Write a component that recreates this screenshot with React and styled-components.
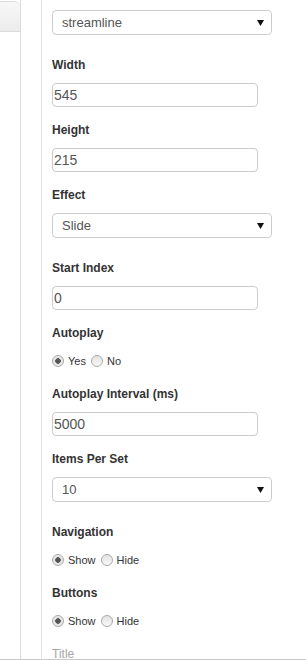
import React from "react";
import styled, { createGlobalStyle } from "styled-components";

const GlobalStyle = createGlobalStyle`
  html, body {
    margin: 0;
    padding: 0;
    background: #ffffff;
    font-family: "Liberation Sans", Arial, sans-serif;
  }
`

const Page = styled.div`
  display: flex;
  height: 659px;
  border-bottom: 1px solid #c9c9c9;
  overflow: hidden;
`
const SidePanel = styled.div`
  width: 20px;
  flex-shrink: 0;
  border-right: 1px solid #dcdcdc;
`
const SideTab = styled.div`
  height: 31px;
  margin-top: 1px;
  background: linear-gradient(#f7f7f7, #ececec);
  border-top: 1px solid #dcdcdc;
  border-bottom: 1px solid #dcdcdc;
  border-top-right-radius: 6px;
  box-sizing: border-box;
`
const Main = styled.div`
  flex: 1;
  margin-left: 20px;
  border-left: 1px solid #e3e3e3;
  padding: 10px 0 0 10px;
`
const Field = styled.div`
  margin-bottom: ${(p) => p.$gap}px;
`
const Label = styled.div`
  font-size: 12px;
  line-height: 14px;
  font-weight: bold;
  color: #333;
  margin-bottom: 11px;
`
const MutedLabel = styled.div`
  font-size: 12px;
  line-height: 14px;
  color: #a6a6a6;
`
const TextInput = styled.input`
  display: block;
  width: 206px;
  height: 24px;
  box-sizing: border-box;
  border: 1px solid #cccccc;
  border-radius: 4px;
  padding: 0 1px;
  font-family: "Liberation Sans", Arial, sans-serif;
  font-size: 14px;
  color: #555;
  background: #fff;
  outline: none;
`
const SelectBox = styled.div`
  display: flex;
  align-items: center;
  justify-content: space-between;
  width: 220px;
  height: 25px;
  box-sizing: border-box;
  border: 1px solid #cccccc;
  border-radius: 4px;
  padding: 0 7px 0 9px;
  font-size: 13px;
  color: #555;
  background: #fff;
`
const RadioRow = styled.div`
  display: flex;
  align-items: center;
  height: 20px;
  font-size: 11px;
  color: #333;
`
const RadioOption = styled.label`
  display: flex;
  align-items: center;
  gap: 4px;
  margin-right: 5px;
`
const RadioDot = styled.span`
  width: 12px;
  height: 12px;
  box-sizing: border-box;
  border-radius: 50%;
  border: 1px solid #a9a9a9;
  background: ${(p) =>
    p.$on
      ? "radial-gradient(circle, #555 0, #555 2.5px, #e2e2e2 3px, #f4f4f4 100%)"
      : "linear-gradient(#e3e3e3, #f8f8f8)"};
`

function Arrow() {
  return (
    <svg width="7" height="6" viewBox="0 0 7 6">
      <path d="M0 0 L7 0 L3.5 6 Z" fill="#111" />
    </svg>
  )
}

function Select({ value }) {
  return (
    <SelectBox>
      <span>{value}</span>
      <Arrow />
    </SelectBox>
  )
}

function Radios({ options }) {
  return (
    <RadioRow>
      {options.map((o, i) => (
        <RadioOption key={o}>
          <RadioDot $on={i === 0} />
          {o}
        </RadioOption>
      ))}
    </RadioRow>
  )
}

export default function App() {
  return (
    <>
      <GlobalStyle />
      <Page>
        <SidePanel>
          <SideTab />
        </SidePanel>
        <Main>
          <Field $gap={23}>
            <Select value="streamline" />
          </Field>

          <Field $gap={16}>
            <Label>Width</Label>
            <TextInput defaultValue="545" />
          </Field>
          <Field $gap={16}>
            <Label>Height</Label>
            <TextInput defaultValue="215" />
          </Field>
          <Field $gap={23}>
            <Label>Effect</Label>
            <Select value="Slide" />
          </Field>
          <Field $gap={16}>
            <Label>Start Index</Label>
            <TextInput defaultValue="0" />
          </Field>
          <Field $gap={16}>
            <Label>Autoplay</Label>
            <Radios options={["Yes", "No"]} />
          </Field>
          <Field $gap={16}>
            <Label>Autoplay Interval (ms)</Label>
            <TextInput defaultValue="5000" />
          </Field>
          <Field $gap={23}>
            <Label>Items Per Set</Label>
            <Select value="10" />
          </Field>
          <Field $gap={16}>
            <Label>Navigation</Label>
            <Radios options={["Show", "Hide"]} />
          </Field>
          <Field $gap={16}>
            <Label>Buttons</Label>
            <Radios options={["Show", "Hide"]} />
          </Field>
          <MutedLabel>Title</MutedLabel>
        </Main>
      </Page>
    </>
  )
}
